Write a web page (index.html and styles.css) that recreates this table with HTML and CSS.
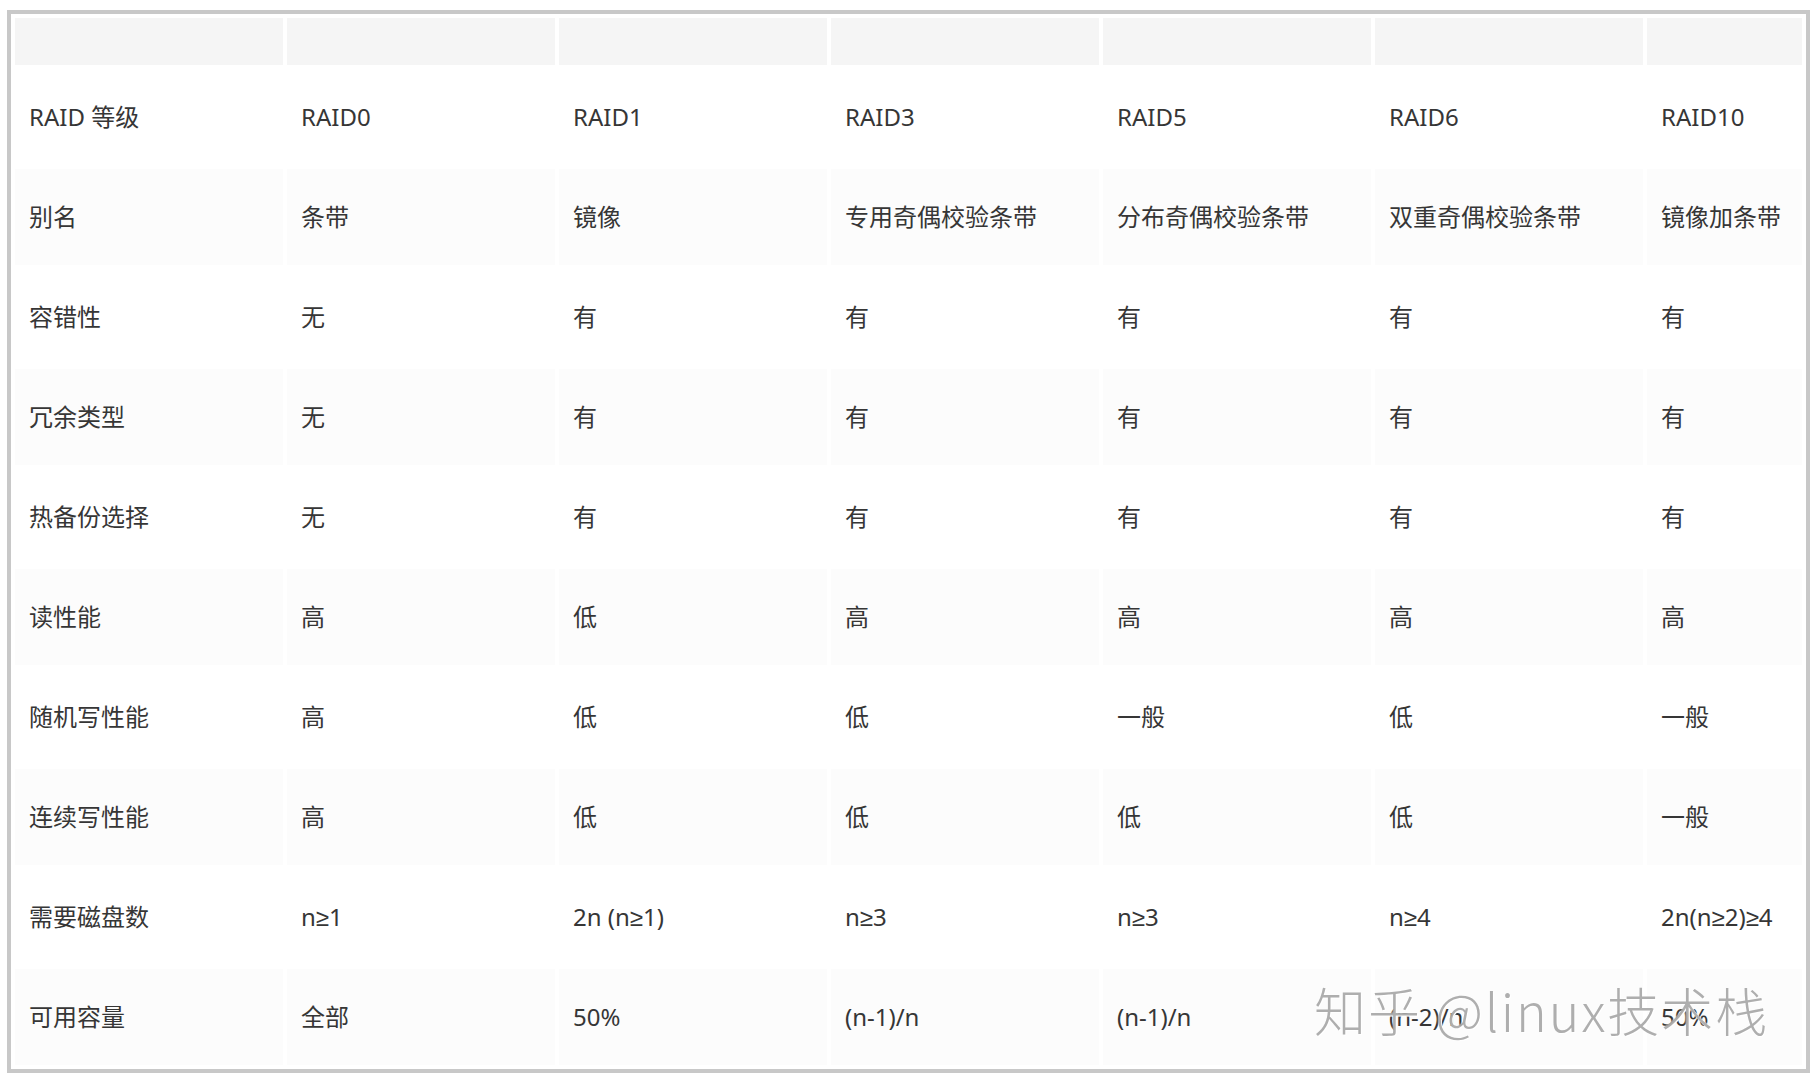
FILE: index.html
```html
<!DOCTYPE html>
<html lang="zh-CN">
<head>
<meta charset="utf-8">
<title>RAID 等级对比</title>
<link rel="stylesheet" href="styles.css">
</head>
<body>
<div class="frame">
  <table class="raid">
    <colgroup>
      <col class="c"><col class="c"><col class="c"><col class="c"><col class="c"><col class="c"><col class="last">
    </colgroup>
    <thead>
      <tr><th></th><th></th><th></th><th></th><th></th><th></th><th></th></tr>
    </thead>
    <tbody>
      <tr><td>RAID 等级</td><td>RAID0</td><td>RAID1</td><td>RAID3</td><td>RAID5</td><td>RAID6</td><td>RAID10</td></tr>
      <tr><td>别名</td><td>条带</td><td>镜像</td><td>专用奇偶校验条带</td><td>分布奇偶校验条带</td><td>双重奇偶校验条带</td><td>镜像加条带</td></tr>
      <tr><td>容错性</td><td>无</td><td>有</td><td>有</td><td>有</td><td>有</td><td>有</td></tr>
      <tr><td>冗余类型</td><td>无</td><td>有</td><td>有</td><td>有</td><td>有</td><td>有</td></tr>
      <tr><td>热备份选择</td><td>无</td><td>有</td><td>有</td><td>有</td><td>有</td><td>有</td></tr>
      <tr><td>读性能</td><td>高</td><td>低</td><td>高</td><td>高</td><td>高</td><td>高</td></tr>
      <tr><td>随机写性能</td><td>高</td><td>低</td><td>低</td><td>一般</td><td>低</td><td>一般</td></tr>
      <tr><td>连续写性能</td><td>高</td><td>低</td><td>低</td><td>低</td><td>低</td><td>一般</td></tr>
      <tr><td>需要磁盘数</td><td>n≥1</td><td>2n (n≥1)</td><td>n≥3</td><td>n≥3</td><td>n≥4</td><td>2n(n≥2)≥4</td></tr>
      <tr><td>可用容量</td><td>全部</td><td>50%</td><td>(n-1)/n</td><td>(n-1)/n</td><td>(n-2)/n</td><td>50%</td></tr>
    </tbody>
  </table>
  <div class="watermark">知乎 @linux技术栈</div>
</div>
</body>
</html>
```
FILE: styles.css
```css
html, body {
  margin: 0;
  padding: 0;
  background: #ffffff;
}

body {
  font-family: "Noto Sans", "Liberation Sans", "Noto Sans CJK SC", sans-serif;
  color: #363636;
}

.frame {
  position: relative;
  margin: 10px 0 0 7px;
  width: 1795px;
  border: 4px solid #c8c8c8;
  background: #ffffff;
}

.raid {
  width: 1795px;
  table-layout: fixed;
  border-collapse: separate;
  border-spacing: 4px;
}

.raid col.c {
  width: 268px;
}

.raid col.last {
  width: 155px;
}

.raid th {
  height: 47px;
  padding: 0;
  background: #f5f5f5;
}

.raid td {
  height: 96px;
  padding: 0 0 0 14px;
  font-size: 24px;
  font-weight: 400;
  line-height: 1.2;
  vertical-align: middle;
  white-space: nowrap;
  text-align: left;
}

.raid tbody tr:nth-child(even) td {
  background: #fcfcfc;
}

.watermark {
  position: absolute;
  left: 1303px;
  top: 970px;
  font-family: "Noto Sans CJK SC", "Noto Sans", sans-serif;
  font-size: 52px;
  font-weight: 300;
  line-height: 1;
  letter-spacing: 2px;
  color: rgba(140, 140, 140, 0.7);
  text-shadow: 0 0 2px #ffffff, 1px 1px 0 #ffffff;
  white-space: nowrap;
  pointer-events: none;
}
```
